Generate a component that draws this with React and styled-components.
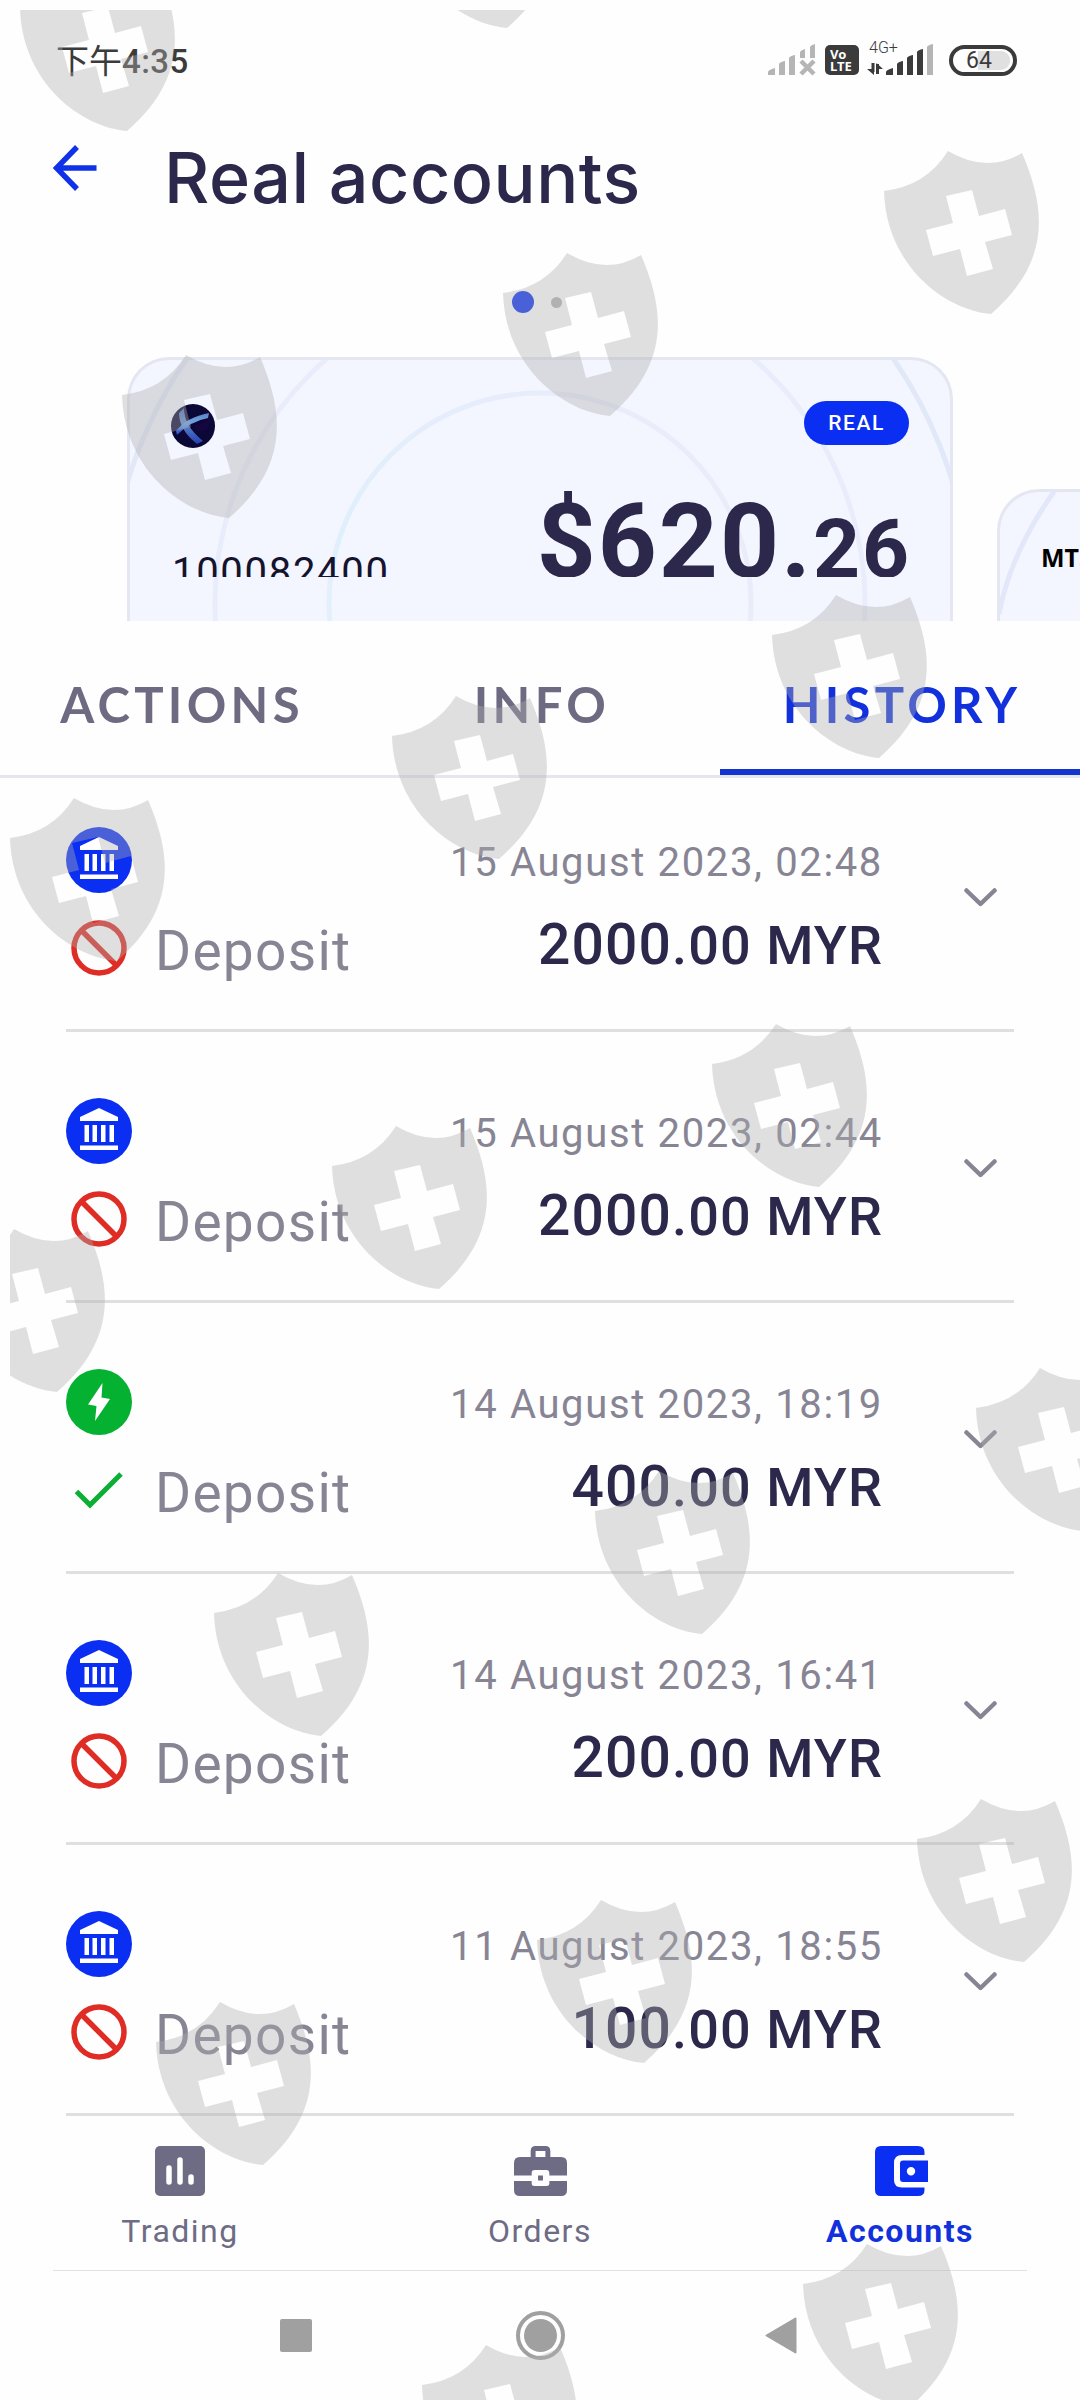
import styled, { createGlobalStyle } from "styled-components";

const transactions = [
  { id: 1, method: "bank", failed: true, date: "15 August 2023, 02:48", amount: "2000" },
  { id: 2, method: "bank", failed: true, date: "15 August 2023, 02:44", amount: "2000" },
  { id: 3, method: "instant", failed: false, date: "14 August 2023, 18:19", amount: "400" },
  { id: 4, method: "bank", failed: true, date: "14 August 2023, 16:41", amount: "200" },
  { id: 5, method: "bank", failed: true, date: "11 August 2023, 18:55", amount: "100" },
];

const shields = [
  [20, -33],
  [400, -136],
  [884, 150],
  [503, 252],
  [122, 354],
  [772, 594],
  [392, 695],
  [10, 797],
  [712, 1023],
  [332, 1125],
  [-50, 1228],
  [976, 1367],
  [595, 1470],
  [214, 1572],
  [917, 1798],
  [537, 1899],
  [156, 2001],
  [803, 2243],
  [422, 2344],
];

function App() {
  return (
    <Screen>
      <GlobalStyle />
      <StatusBar />
      <Header>
        <BackArrow />
        <Title>Real accounts</Title>
      </Header>
      <Dots>
        <Dot $active />
        <Dot />
      </Dots>
      <Carousel>
        <AccountCard />
        <NextCard>
          <NextCardRings />
          <Platform>MT5</Platform>
        </NextCard>
      </Carousel>
      <Tabs>
        <Tab>ACTIONS</Tab>
        <Tab>INFO</Tab>
        <Tab $active>HISTORY</Tab>
      </Tabs>
      <List>
        {transactions.map((item) => (
          <Transaction key={item.id} item={item} />
        ))}
      </List>
      <BottomNav>
        <NavItem>
          <TradingIcon />
          Trading
        </NavItem>
        <NavItem>
          <OrdersIcon />
          Orders
        </NavItem>
        <NavItem $active>
          <WalletIcon />
          Accounts
        </NavItem>
      </BottomNav>
      <SystemNav>
        <svg width="32" height="33" viewBox="0 0 32 33">
          <rect width="32" height="33" rx="2" fill="#a0a0a0" />
        </svg>
        <svg width="49" height="49" viewBox="0 0 49 49">
          <circle cx="24.5" cy="24.5" r="22.5" fill="#fefefe" stroke="#a0a0a0" strokeWidth="4" />
          <circle cx="24.5" cy="24.5" r="16.5" fill="#a0a0a0" />
        </svg>
        <svg width="32" height="37" viewBox="0 0 32 37">
          <path
            d="M1.500 18.500L30.500 1.500V35.500Z"
            fill="#a0a0a0"
            stroke="#a0a0a0"
            strokeWidth="2"
            strokeLinejoin="round"
          />
        </svg>
      </SystemNav>
      <ShieldOverlay />
    </Screen>
  );
}

export default App;

function StatusBar() {
  return (
    <StatusContainer>
      <Time>
        下午<b>4:35</b>
      </Time>
      <StatusIcons>
        <svg width="49" height="32" viewBox="0 0 49 32" fill="#b5b5b5">
          <path d="M0 31v-3q0-2 7-4v7zM11 31V20q1-2 6-3v14zM21 31V14q1-2 6-3v20zM32 14V8q1-2 5-3v9zM42 14V3q1-2 5-3v14z" />
          <path d="M33 17l13 13M46 17L33 30" stroke="#b5b5b5" strokeWidth="4.500" />
        </svg>
        <Volte>
          <span>Vo</span>
          <span>LTE</span>
        </Volte>
        <MobileData>
          <NetworkType>4G+</NetworkType>
          <svg width="68" height="32" viewBox="0 0 68 32" fill="#3b3b3b">
            <path d="M6 19v9M10.500 20v10" stroke="#3b3b3b" strokeWidth="3" />
            <path d="M0 25h7v6zM9.500 19l6.500 6h-6.500z" />
            <path d="M19 31v-3q0-2 7-4v7zM30 31V20q1-2 6-3v14zM40 31V14q1-2 6-3v20zM50 31V8q1-2 6-3v26z" />
            <path d="M60 31V3q1-2 6-3v31z" fill="#b5b5b5" />
          </svg>
        </MobileData>
        <Battery>
          <span>64</span>
        </Battery>
      </StatusIcons>
    </StatusContainer>
  );
}

function AccountCard() {
  return (
    <Card>
      <Rings viewBox="0 0 826 264">
        <defs>
          <linearGradient id="inner" x1="0" y1="1" x2="1" y2="0.500">
            <stop offset="0" stopColor="#ecf0fc" />
            <stop offset="0.300" stopColor="#e0effc" />
            <stop offset="0.550" stopColor="#e5edfc" />
            <stop offset="1" stopColor="#eaecfa" />
          </linearGradient>
        </defs>
        <g fill="none" strokeWidth="5">
          <circle cx="413" cy="247" r="211" stroke="url(#inner)" />
          <circle cx="413" cy="247" r="325" stroke="#e9edfb" />
          <circle cx="413" cy="247" r="430" stroke="#e1e8f8" />
        </g>
      </Rings>
      <CardBody>
        <CardTop>
          <BrokerLogo />
          <Badge>REAL</Badge>
        </CardTop>
        <CardBottom>
          <AccountNumber>100082400</AccountNumber>
          <Balance>
            $620.<small>26</small>
          </Balance>
        </CardBottom>
      </CardBody>
    </Card>
  );
}

function Transaction({ item }) {
  return (
    <Row>
      <Details>
        {item.method === "bank" ? <BankIcon /> : <InstantIcon />}
        <Status>
          {item.failed ? <FailedIcon /> : <DoneIcon />}
          <Operation>Deposit</Operation>
        </Status>
      </Details>
      <Values>
        <DateText>{item.date}</DateText>
        <Amount>
          {item.amount}
          <small>.00 MYR</small>
        </Amount>
      </Values>
      <Chevron width="33" height="20" viewBox="0 0 33 20">
        <path
          d="M2.500 2.500L16.500 16L30.500 2.500"
          fill="none"
          stroke="#878494"
          strokeWidth="4.500"
          strokeLinecap="round"
          strokeLinejoin="round"
        />
      </Chevron>
    </Row>
  );
}

function BackArrow() {
  return (
    <ArrowSvg width="44" height="46" viewBox="0 0 44 46">
      <path d="M24 2L3.500 23L24 44M3.500 23H43.500" fill="none" stroke="#0f31e8" strokeWidth="5.500" />
    </ArrowSvg>
  );
}

function BrokerLogo() {
  return (
    <LogoSvg width="44" height="44" viewBox="0 0 44 44">
      <defs>
        <linearGradient id="beam" x1="0" y1="0" x2="0" y2="1">
          <stop offset="0" stopColor="#5d7fc4" />
          <stop offset="0.400" stopColor="#6ea3e0" />
          <stop offset="1" stopColor="#2748c8" />
        </linearGradient>
      </defs>
      <circle cx="22" cy="22" r="22" fill="#0b0736" />
      <path d="M23 21Q33 20 39 14Q40 30 26 27Z" fill="#14063f" />
      <path d="M5 27Q16 13 38 9L37 14Q20 17 6 31Z" fill="url(#beam)" />
      <path d="M13 4Q13 22 32 37L26 40Q8 26 8 9Z" fill="url(#beam)" opacity="0.850" />
    </LogoSvg>
  );
}

function NextCardRings() {
  return (
    <Rings viewBox="0 0 826 132">
      <path d="M59 0Q14 62 2 125" fill="none" stroke="#e2e8f9" strokeWidth="5" />
    </Rings>
  );
}

function BankIcon() {
  return (
    <svg width="66" height="66" viewBox="0 0 66 66">
      <circle cx="33" cy="33" r="33" fill="#0b2ff2" />
      <path
        d="M33 10L52 19V23H14V19ZM18.500 27H23V44H18.500ZM26.500 27H31V44H26.500ZM35 27H39.500V44H35ZM43.500 27H48V44H43.500ZM14 47.500H52V52H14Z"
        fill="#fff"
      />
    </svg>
  );
}

function InstantIcon() {
  return (
    <svg width="66" height="66" viewBox="0 0 66 66">
      <circle cx="33" cy="33" r="33" fill="#04b130" />
      <path d="M36.500 14L22 35.500L30.500 37L29 52L44 30L35.500 28.500Z" fill="#fff" />
    </svg>
  );
}

function FailedIcon() {
  return (
    <svg width="56" height="56" viewBox="0 0 56 56">
      <g fill="none" stroke="#df2c24" strokeWidth="5.500">
        <circle cx="28" cy="28" r="25" />
        <path d="M10.500 10.500L45.500 45.500" />
      </g>
    </svg>
  );
}

function DoneIcon() {
  return (
    <svg width="56" height="56" viewBox="0 0 56 56">
      <path d="M5.500 29.500L19 43L50 12" fill="none" stroke="#0cae34" strokeWidth="5" />
    </svg>
  );
}

function TradingIcon() {
  return (
    <svg width="50" height="50" viewBox="0 0 50 50">
      <rect width="50" height="50" rx="5" fill="#6e6b85" />
      <path
        d="M14 22V36M25 14V36M36 31V36"
        stroke="#fefefe"
        strokeWidth="5.500"
        strokeLinecap="round"
      />
    </svg>
  );
}

function OrdersIcon() {
  return (
    <svg width="53" height="50" viewBox="0 0 54 50" preserveAspectRatio="none" fill="#6e6b85">
      <path
        fillRule="evenodd"
        d="M17 11V5Q17 0 22 0H32Q37 0 37 5V11H48Q54 11 54 17V29.500H36V27Q36 24 33 24H21Q18 24 18 27V29.500H0V17Q0 11 6 11ZM22 11H32V5H22Z"
      />
      <path d="M0 35H18V37.500Q18 40 21 40H33Q36 40 36 37.500V35H54V44Q54 50 48 50H6Q0 50 0 44Z" />
      <rect x="24.500" y="29.500" width="5" height="5" />
    </svg>
  );
}

function WalletIcon() {
  return (
    <WalletSvg width="54" height="50" viewBox="0 0 54 50">
      <path d="M6 0H43Q49.500 0 49.500 6V9H27Q19 9 19 17V34Q19 41.500 27 41.500H49.500V44Q49.500 50 43 50H6Q0 50 0 44V6Q0 0 6 0Z" />
      <path
        fillRule="evenodd"
        d="M28 14.500H53V36H28Q25 36 25 33V17.500Q25 14.500 28 14.500ZM36 21A4.200 4.200 0 1 0 36.010 29.400A4.200 4.200 0 0 0 36 21Z"
      />
    </WalletSvg>
  );
}

function ShieldOverlay() {
  return (
    <Overlay viewBox="10 10 1070 2390">
      {shields.map(([x, y]) => (
        <path
          key={`${x}-${y}`}
          transform={`translate(${x} ${y})`}
          fillRule="evenodd"
          d="M0 41Q42 36 64 1Q103 24 138 3C160 54 170 110 107 164C60 160 2 115 0 41Z
            M62 46L88 40L95 66L121 59L128 85L101 92L109 119L83 126L76 99L49 106L42 80L69 73Z"
        />
      ))}
    </Overlay>
  );
}

const GlobalStyle = createGlobalStyle`
  * {
    box-sizing: border-box;
  }

  body {
    margin: 0;
    background-color: #fefefe;
    font-family: Roboto, "Noto Sans CJK SC", sans-serif;
  }

  svg {
    display: block;
    flex-shrink: 0;
  }
`;

const Screen = styled.div`
  position: relative;
  display: flex;
  flex-direction: column;
  width: 1080px;
  height: 2400px;
  overflow: hidden;
`;

const StatusContainer = styled.div`
  display: flex;
  align-items: center;
  justify-content: space-between;
  height: 120px;
  padding: 0 63px 0 56px;
`;

const Time = styled.span`
  padding-top: 3px;
  color: #3b3b3b;
  font-size: 33px;
  line-height: 40px;

  b {
    font-weight: 500;
    letter-spacing: 0.4px;
  }
`;

const StatusIcons = styled.div`
  display: flex;
  align-items: center;
`;

const Volte = styled.div`
  display: flex;
  flex-direction: column;
  justify-content: center;
  width: 34px;
  height: 30px;
  margin: 0 8px;
  padding-left: 5px;
  border-radius: 5px;
  background-color: #3b3b3b;
  color: #fff;
  font: 700 13px/12px "Noto Sans", sans-serif;
`;

const MobileData = styled.div`
  position: relative;
`;

const NetworkType = styled.span`
  position: absolute;
  top: -4px;
  left: 2px;
  color: #3b3b3b;
  font-size: 16px;
  font-weight: 300;
  line-height: 16px;
`;

const Battery = styled.div`
  display: flex;
  align-items: center;
  justify-content: center;
  width: 68px;
  height: 31px;
  margin-left: 14px;
  padding: 3px;
  border: 4px solid #3b3b3b;
  border-radius: 16px;

  span {
    flex: 1;
    padding: 1px 0 0 10px;
    border-radius: 9px;
    background: linear-gradient(to right, transparent 40%, #e0e0e0 40%);
    color: #3b3b3b;
    font-size: 23px;
    line-height: 18px;
  }
`;

const Header = styled.header`
  display: flex;
  align-items: center;
  gap: 67px;
  height: 112px;
  padding-left: 53px;
`;

const ArrowSvg = styled.svg`
  margin-bottom: 16px;
`;

const Title = styled.h1`
  margin: 0;
  padding-top: 3px;
  color: #2b284b;
  font-family: Inter, sans-serif;
  font-size: 70px;
  font-weight: 500;
  letter-spacing: 0.5px;
  white-space: nowrap;
`;

const Dots = styled.div`
  display: flex;
  align-items: center;
  justify-content: center;
  gap: 17px;
  height: 125px;
  padding: 15px 7px 0 0;
`;

const Dot = styled.span`
  width: ${(props) => (props.$active ? "22px" : "11px")};
  height: ${(props) => (props.$active ? "22px" : "11px")};
  border-radius: 50%;
  background-color: ${(props) => (props.$active ? "#0b2ff2" : "#b3b3b3")};
`;

const Carousel = styled.div`
  display: flex;
  align-items: flex-end;
  gap: 44px;
  height: 264px;
  padding-left: 127px;
  overflow: hidden;
`;

const Card = styled.section`
  position: relative;
  flex-shrink: 0;
  width: 826px;
  height: 264px;
  border: 3px solid #e4e7f2;
  border-bottom: none;
  border-radius: 42px 42px 0 0;
  background-color: #f3f6fe;
  overflow: hidden;
`;

const NextCard = styled(Card)`
  height: 132px;
  padding: 48px 0 0 41px;
`;

const Platform = styled.span`
  position: relative;
  display: block;
  color: #000;
  font: 700 25px/34px "Noto Sans", sans-serif;
`;

const Rings = styled.svg`
  position: absolute;
  top: -3px;
  left: -3px;
  width: 826px;
`;

const CardBody = styled.div`
  position: relative;
  height: 217px;
  padding: 41px 39px 0 41px;
  overflow: hidden;
`;

const CardTop = styled.div`
  display: flex;
  align-items: center;
  justify-content: space-between;
  height: 44px;
  padding-right: 2px;
`;

const LogoSvg = styled.svg`
  margin-top: 6px;
`;

const Badge = styled.span`
  width: 105px;
  height: 44px;
  border-radius: 22px;
  background-color: #0b2ff2;
  color: #fff;
  font-size: 21px;
  font-weight: 500;
  line-height: 45px;
  letter-spacing: 1.6px;
  text-align: center;
`;

const CardBottom = styled.div`
  display: flex;
  align-items: baseline;
  justify-content: space-between;
  margin-top: 37px;
`;

const AccountNumber = styled.span`
  padding-left: 1px;
  color: #15132e;
  font-size: 40px;
  letter-spacing: 1.700px;
  transform: translateY(9px);
`;

const Balance = styled.span`
  color: #2b284b;
  font-size: 103px;
  font-weight: 700;
  line-height: 120px;
  letter-spacing: 2px;

  small {
    font-size: 82px;
  }
`;

const Tabs = styled.nav`
  display: grid;
  grid-template-columns: repeat(3, 1fr);
  height: 157px;
  border-bottom: 3px solid #e6e7ee;
`;

const Tab = styled.span`
  display: flex;
  align-items: center;
  justify-content: center;
  padding: ${(props) => (props.$active ? "17px" : "11px")} 0 0 4px;
  border-bottom: ${(props) => (props.$active ? "6px solid #1434cf" : "none")};
  color: ${(props) => (props.$active ? "#1231dc" : "#6e6a82")};
  font-family: Lato, sans-serif;
  font-size: 49px;
  font-weight: 700;
  letter-spacing: 4.300px;
`;

const List = styled.div`
  margin: -17px 66px 0;
`;

const Row = styled.article`
  display: grid;
  grid-template-columns: 1fr auto 33px;
  align-items: start;
  height: 271px;
  padding: 66px 17px 0 0;
  border-bottom: 3px solid #dfdfe0;
`;

const Details = styled.div`
  display: flex;
  flex-direction: column;
  gap: 27px;
`;

const Status = styled.div`
  display: flex;
  gap: 28px;
  height: 56px;
  padding-left: 5px;
`;

const Operation = styled.span`
  margin-top: -1px;
  color: #878494;
  font-size: 55px;
  line-height: 64px;
  letter-spacing: 1.300px;
`;

const Values = styled.div`
  display: flex;
  flex-direction: column;
  align-items: flex-end;
  gap: 25px;
  margin-right: 81px;
  padding-top: 12px;
`;

const DateText = styled.time`
  color: #878494;
  font-size: 40px;
  line-height: 48px;
  letter-spacing: 1.650px;
`;

const Amount = styled.span`
  color: #2b284b;
  font-size: 57px;
  font-weight: 500;
  line-height: 66px;
  letter-spacing: 1.100px;

  small {
    font-size: 54px;
  }
`;

const Chevron = styled.svg`
  margin-top: 61px;
`;

const BottomNav = styled.nav`
  display: grid;
  grid-template-columns: repeat(3, 360px);
  height: 155px;
  padding-top: 30px;
  background: linear-gradient(#e2e2e2, #e2e2e2) center bottom / 974px 1px no-repeat;
`;

const NavItem = styled.a`
  display: flex;
  flex-direction: column;
  align-items: center;
  gap: 15px;
  color: ${(props) => (props.$active ? "#1231dc" : "#6e6b85")};
  font-size: 32px;
  font-weight: ${(props) => (props.$active ? 700 : 400)};
  line-height: 40px;
  letter-spacing: 1.500px;
`;

const WalletSvg = styled.svg`
  margin-left: 4px;
  fill: #0b2ff2;
`;

const SystemNav = styled.div`
  display: grid;
  grid-template-columns: 240px 248px 234px;
  align-items: center;
  justify-items: center;
  flex: 1;
  padding-left: 176px;
`;

const Overlay = styled.svg`
  position: absolute;
  top: 10px;
  left: 10px;
  width: 1070px;
  height: 2390px;
  overflow: hidden;
  fill: rgba(176, 176, 176, 0.39);
  pointer-events: none;
`;
